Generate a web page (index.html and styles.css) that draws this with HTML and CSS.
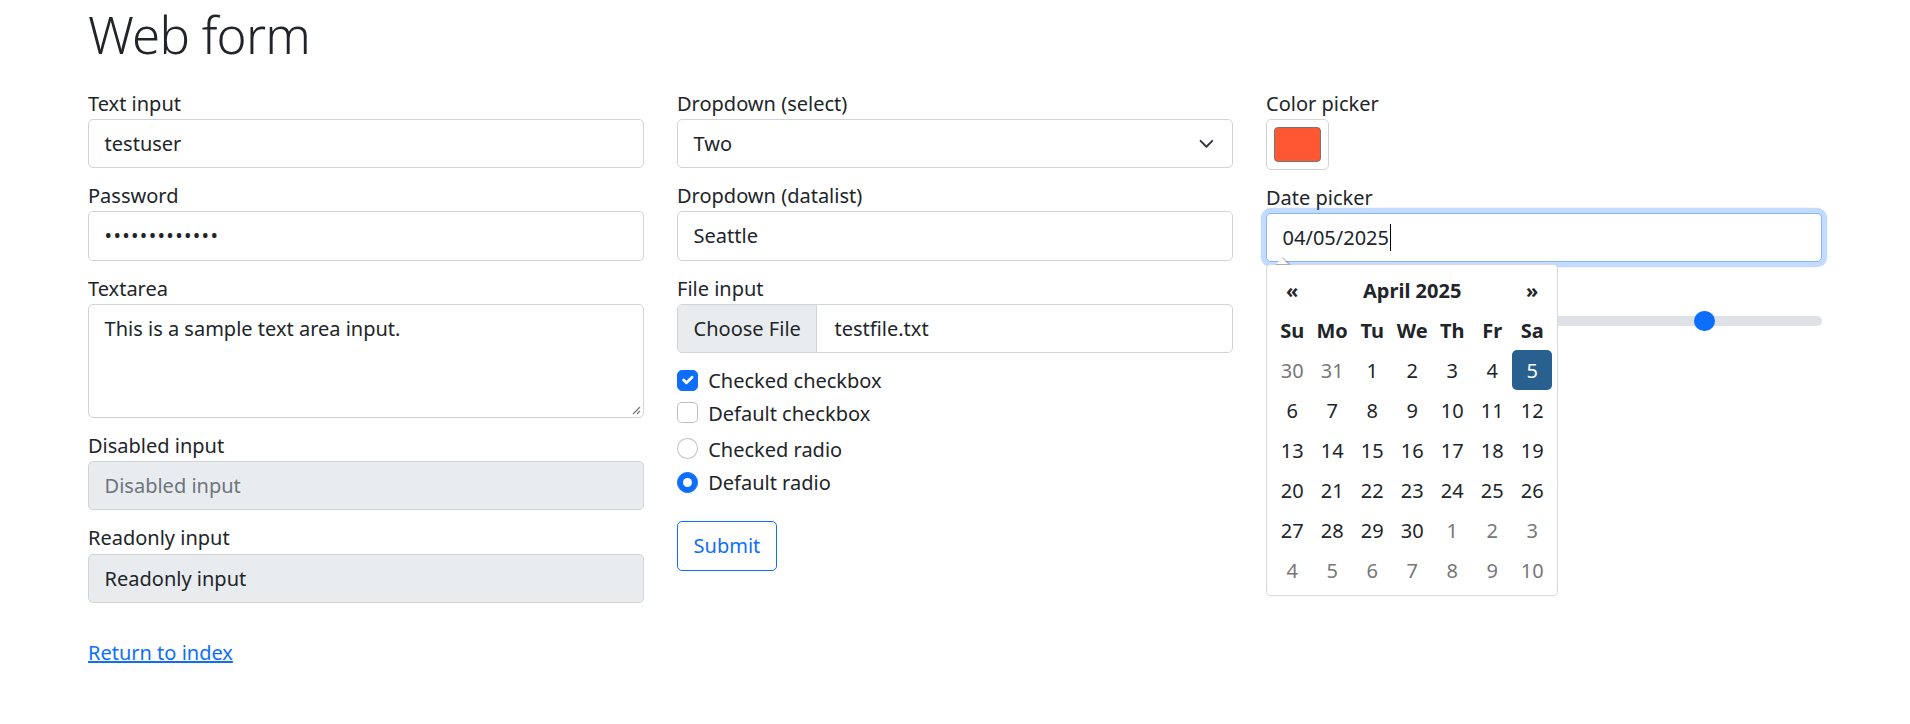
FILE: index.html
```html
<!DOCTYPE html>
<html lang="en">
<head>
<meta charset="utf-8">
<title>Web form</title>
<link rel="stylesheet" href="styles.css">
</head>
<body>
<main class="container">
  <h1 class="title">Web form</h1>
  <form class="form-grid">
    <div class="col">
      <div class="field">
        <div class="label">Text input</div>
        <div class="control">testuser</div>
      </div>
      <div class="field">
        <div class="label">Password</div>
        <div class="control password">&#8226;&#8226;&#8226;&#8226;&#8226;&#8226;&#8226;&#8226;&#8226;&#8226;&#8226;&#8226;&#8226;</div>
      </div>
      <div class="field">
        <div class="label">Textarea</div>
        <div class="control textarea">This is a sample text area input.<svg class="grip" viewBox="0 0 10 10" width="10" height="10"><path d="M9 2 2 9M9 6 6 9" stroke="#7a7a7a" stroke-width="1.2" fill="none"/></svg></div>
      </div>
      <div class="field">
        <div class="label">Disabled input</div>
        <div class="control disabled">Disabled input</div>
      </div>
      <div class="field">
        <div class="label">Readonly input</div>
        <div class="control readonly">Readonly input</div>
      </div>
    </div>

    <div class="col">
      <div class="field">
        <div class="label">Dropdown (select)</div>
        <div class="control select"><span>Two</span><svg class="chevron" viewBox="0 0 16 16" width="20.8" height="15.6"><path fill="none" stroke="#343a40" stroke-linecap="round" stroke-linejoin="round" stroke-width="2" d="m2 5 6 6 6-6"/></svg></div>
      </div>
      <div class="field">
        <div class="label">Dropdown (datalist)</div>
        <div class="control">Seattle</div>
      </div>
      <div class="field">
        <div class="label">File input</div>
        <div class="control file"><span class="file-btn">Choose File</span><span class="file-name">testfile.txt</span></div>
      </div>
      <div class="check"><span class="box on"><svg viewBox="0 0 20 20" width="20" height="20"><path fill="none" stroke="#fff" stroke-linecap="round" stroke-linejoin="round" stroke-width="3" d="m6 10 3 3 6-6"/></svg></span>Checked checkbox</div>
      <div class="check"><span class="box"></span>Default checkbox</div>
      <div class="check radio first-radio"><span class="box round"></span>Checked radio</div>
      <div class="check radio"><span class="box round on"><span class="dot"></span></span>Default radio</div>
      <div class="submit-row"><span class="btn">Submit</span></div>
    </div>

    <div class="col">
      <div class="field">
        <div class="label">Color picker</div>
        <div class="color"><span class="swatch"></span></div>
      </div>
      <div class="field">
        <div class="label">Date picker</div>
        <div class="date-wrap">
          <div class="control focus">04/05/2025<span class="caret"></span></div>
          <div class="datepicker">
            <div class="dp-grid">
              <span class="nav">&laquo;</span><span class="switch">April 2025</span><span class="nav">&raquo;</span>
              <span class="dow">Su</span><span class="dow">Mo</span><span class="dow">Tu</span><span class="dow">We</span><span class="dow">Th</span><span class="dow">Fr</span><span class="dow">Sa</span>
              <span class="day old">30</span><span class="day old">31</span><span class="day">1</span><span class="day">2</span><span class="day">3</span><span class="day">4</span><span class="day active">5</span>
              <span class="day">6</span><span class="day">7</span><span class="day">8</span><span class="day">9</span><span class="day">10</span><span class="day">11</span><span class="day">12</span>
              <span class="day">13</span><span class="day">14</span><span class="day">15</span><span class="day">16</span><span class="day">17</span><span class="day">18</span><span class="day">19</span>
              <span class="day">20</span><span class="day">21</span><span class="day">22</span><span class="day">23</span><span class="day">24</span><span class="day">25</span><span class="day">26</span>
              <span class="day">27</span><span class="day">28</span><span class="day">29</span><span class="day">30</span><span class="day old">1</span><span class="day old">2</span><span class="day old">3</span>
              <span class="day old">4</span><span class="day old">5</span><span class="day old">6</span><span class="day old">7</span><span class="day old">8</span><span class="day old">9</span><span class="day old">10</span>
            </div>
          </div>
        </div>
      </div>
      <div class="field">
        <div class="label"></div>
        <div class="range"><div class="track"></div><span class="thumb"></span></div>
      </div>
    </div>
  </form>
  <div class="back-row"><a class="back" href="#">Return to index</a></div>
</main>
</body>
</html>
```

FILE: styles.css
```css
* { box-sizing: border-box; }

html, body {
  margin: 0;
  background: #fff;
}

body {
  font-family: "Noto Sans", "Open Sans", sans-serif;
  font-size: 20px;
  line-height: 31.2px;
  color: #212529;
}

.container {
  width: 1734px;
  margin: 0 auto;
}

.title {
  margin: 0;
  font-size: 51px;
  font-weight: 300;
  line-height: 69.5px;
  letter-spacing: -0.8px;
}

.form-grid {
  display: grid;
  grid-template-columns: repeat(3, 1fr);
  column-gap: 33px;
  align-items: start;
  margin-top: 18px;
}

.field {
  margin-bottom: 12px;
}

.label {
  height: 31.2px;
  line-height: 31.2px;
}

.control {
  position: relative;
  display: flex;
  align-items: center;
  height: 49.4px;
  padding: 0 15.6px;
  border: 1px solid #ced4da;
  border-radius: 5px;
  background: #fff;
  white-space: nowrap;
}

.password {
  letter-spacing: 1.3px;
}

.textarea {
  height: 114px;
  align-items: flex-start;
  padding-top: 8.5px;
}

.grip {
  position: absolute;
  right: 2px;
  bottom: 2px;
}

.disabled {
  background: #e9ecef;
  color: #6c757d;
}

.readonly {
  background: #e9ecef;
}

.select {
  justify-content: space-between;
}

.chevron {
  display: block;
}

.file {
  padding: 0;
  overflow: hidden;
}

.file-btn {
  display: flex;
  align-items: center;
  height: 100%;
  padding: 0 15.6px;
  background: #e9ecef;
  border-right: 1px solid #ced4da;
}

.file-name {
  margin-left: 17px;
}

.check {
  display: flex;
  align-items: flex-start;
  height: 31.2px;
  margin-bottom: 1.1px;
}

.check.radio {
  margin-top: 2.5px;
}

.check.first-radio {
  margin-top: 4.9px;
}

.box {
  flex: none;
  display: flex;
  align-items: center;
  justify-content: center;
  width: 20.8px;
  height: 20.8px;
  margin-top: 4.7px;
  margin-right: 10.4px;
  border: 1px solid rgba(0, 0, 0, 0.25);
  border-radius: 5px;
  background: #fff;
}

.box.on {
  background: #0d6efd;
  border-color: #0d6efd;
}

.box.round {
  border-radius: 50%;
}

.dot {
  width: 9.6px;
  height: 9.6px;
  border-radius: 50%;
  background: #fff;
}

.submit-row {
  margin-top: 22.8px;
  display: flex;
}

.btn {
  display: flex;
  align-items: center;
  height: 49.4px;
  padding: 0 15.6px;
  border: 1px solid #0d6efd;
  border-radius: 5px;
  color: #0d6efd;
  background: #fff;
}

.color {
  width: 63px;
  height: 51px;
  padding: 7px;
  border: 1px solid #ced4da;
  border-radius: 5px;
}

.swatch {
  display: block;
  width: 100%;
  height: 100%;
  background: #ff5733;
  border: 1px solid #767676;
  border-radius: 4px;
}

.date-wrap {
  position: relative;
}

.focus {
  border-color: #86b7fe;
  box-shadow: 0 0 0 5.2px rgba(13, 110, 253, 0.25);
}

.caret {
  display: inline-block;
  width: 1.4px;
  height: 27px;
  margin-left: 1px;
  background: #000;
}

.datepicker {
  position: absolute;
  z-index: 10;
  top: calc(100% + 1.7px);
  left: 0;
  padding: 5.2px;
  border: 1px solid rgba(0, 0, 0, 0.15);
  border-radius: 5px;
  background: #fff;
}

.datepicker::before {
  content: "";
  position: absolute;
  top: -8px;
  left: 8px;
  border-left: 8px solid transparent;
  border-right: 8px solid transparent;
  border-bottom: 8px solid rgba(0, 0, 0, 0.2);
}

.datepicker::after {
  content: "";
  position: absolute;
  top: -6.6px;
  left: 9.4px;
  border-left: 6.6px solid transparent;
  border-right: 6.6px solid transparent;
  border-bottom: 6.6px solid #fff;
}

.dp-grid {
  display: grid;
  grid-template-columns: repeat(7, 40px);
  grid-auto-rows: 40px;
}

.dp-grid span {
  display: flex;
  align-items: center;
  justify-content: center;
}

.nav,
.switch,
.dow {
  font-weight: 700;
}

.switch {
  grid-column: span 5;
}

.day.old {
  color: #777;
}

.day.active {
  background: #286090;
  color: #fff;
  border-radius: 5px;
}

.range {
  position: relative;
  display: flex;
  align-items: center;
  height: 31.2px;
}

.track {
  flex: 1;
  height: 10.4px;
  border-radius: 5.2px;
  background: #dee2e6;
}

.thumb {
  position: absolute;
  top: 5.2px;
  left: calc((100% - 20.8px) * 0.8);
  width: 20.8px;
  height: 20.8px;
  border-radius: 50%;
  background: #0d6efd;
}

.back-row {
  margin-top: 22.2px;
  line-height: 31.2px;
}

.back {
  color: #0d6efd;
  text-decoration: underline;
}
```
